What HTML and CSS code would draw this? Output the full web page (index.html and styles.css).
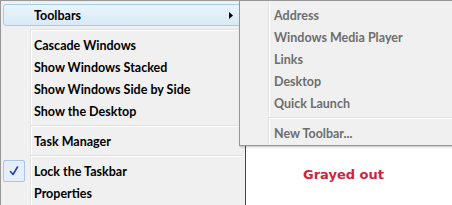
FILE: index.html
```html
<!DOCTYPE html>
<html lang="en">
<head>
<meta charset="utf-8">
<title>Taskbar context menu</title>
<link rel="stylesheet" href="styles.css">
</head>
<body>
<div class="screen">
  <div class="menu main">
    <div class="item hot">
      <span class="icon"></span>
      <span class="label">Toolbars</span>
      <svg class="arrow" width="4" height="7" viewBox="0 0 4 7"><polygon points="0,0 4,3.5 0,7" fill="#000"/></svg>
    </div>
    <div class="sep"></div>
    <div class="item"><span class="icon"></span><span class="label">Cascade Windows</span></div>
    <div class="item"><span class="icon"></span><span class="label">Show Windows Stacked</span></div>
    <div class="item"><span class="icon"></span><span class="label">Show Windows Side by Side</span></div>
    <div class="item"><span class="icon"></span><span class="label">Show the Desktop</span></div>
    <div class="sep"></div>
    <div class="item"><span class="icon"></span><span class="label">Task Manager</span></div>
    <div class="sep"></div>
    <div class="item">
      <span class="icon"><span class="check"><svg width="20" height="20" viewBox="0 0 20 20"><path d="M6.5 10.5 L9 13.5 L13.5 6" fill="none" stroke="#2443a8" stroke-width="1.6" stroke-linecap="round" stroke-linejoin="round"/></svg></span></span>
      <span class="label">Lock the Taskbar</span>
    </div>
    <div class="item"><span class="icon"></span><span class="label">Properties</span></div>
  </div>
  <div class="desk">
    <div class="note">Grayed out</div>
  </div>
  <div class="menu sub">
    <div class="item dim"><span class="icon"></span><span class="label">Address</span></div>
    <div class="item dim"><span class="icon"></span><span class="label">Windows Media Player</span></div>
    <div class="item dim"><span class="icon"></span><span class="label">Links</span></div>
    <div class="item dim"><span class="icon"></span><span class="label">Desktop</span></div>
    <div class="item dim"><span class="icon"></span><span class="label">Quick Launch</span></div>
    <div class="sep"></div>
    <div class="item dim"><span class="icon"></span><span class="label">New Toolbar...</span></div>
  </div>
</div>
</body>
</html>
```
FILE: styles.css
```css
html, body {
  margin: 0;
  padding: 0;
  background: #fff;
}
.screen {
  position: relative;
  width: 452px;
  height: 205px;
  overflow: hidden;
  display: flex;
  font-family: Lato, "Open Sans", sans-serif;
  font-weight: 700;
  font-size: 12.5px;
}
.menu {
  background-color: #f0f0f0;
  box-sizing: border-box;
  padding: 3px 0 1px;
  display: flex;
  flex-direction: column;
}
.main {
  width: 246px;
  height: 205px;
  flex: none;
  border-top: 1px solid #999;
  border-left: 1px solid #979797;
  border-right: 1px solid #444;
  background-image: linear-gradient(to right, transparent 29px, #e2e3e3 29px, #e2e3e3 30px, #fff 30px, #fff 31px, transparent 31px);
}
.sub {
  position: absolute;
  left: 239px;
  top: 0;
  width: 240px;
  border: 1px solid #979797;
  box-shadow: 1px 1px 2px rgba(0,0,0,0.25);
  background-image: linear-gradient(to right, transparent 28px, #e2e3e3 28px, #e2e3e3 29px, #fff 29px, #fff 30px, transparent 30px);
}
.item {
  height: 22px;
  margin: 0 2px;
  box-sizing: border-box;
  display: flex;
  align-items: center;
  color: #000;
  white-space: nowrap;
  border: 1px solid transparent;
  border-radius: 3px;
}
.item.hot {
  border-color: #a3cde8;
  background: linear-gradient(to bottom, #eaf4fb, #d8eaf7);
}
.item.dim {
  color: #6e6e6e;
}
.icon {
  width: 31px;
  flex: none;
  display: flex;
  align-items: center;
  margin-left: -1px;
}
.sub .icon {
  width: 32px;
}
.label {
  line-height: 16px;
  padding-top: 1px;
}
.arrow {
  margin-left: auto;
  margin-right: 9px;
}
.check {
  width: 22px;
  height: 22px;
  box-sizing: border-box;
  border: 1px solid #aac5e6;
  border-radius: 2px;
  background: #e6eef9;
  display: flex;
  align-items: center;
  justify-content: center;
}
.sep {
  height: 8px;
  flex: none;
  background: linear-gradient(to bottom, transparent 3px, #e0e0e0 3px, #e0e0e0 4px, #fff 4px, #fff 5px, transparent 5px);
  margin-left: 30px;
  margin-right: 2px;
}
.sub .sep {
  margin-left: 29px;
}
.desk {
  flex: 1;
  background: #fff;
  padding: 167px 0 0 57px;
}
.note {
  font-family: "DejaVu Sans", Verdana, sans-serif;
  font-weight: 700;
  font-size: 13px;
  line-height: 16px;
  color: #d3223a;
}
```
